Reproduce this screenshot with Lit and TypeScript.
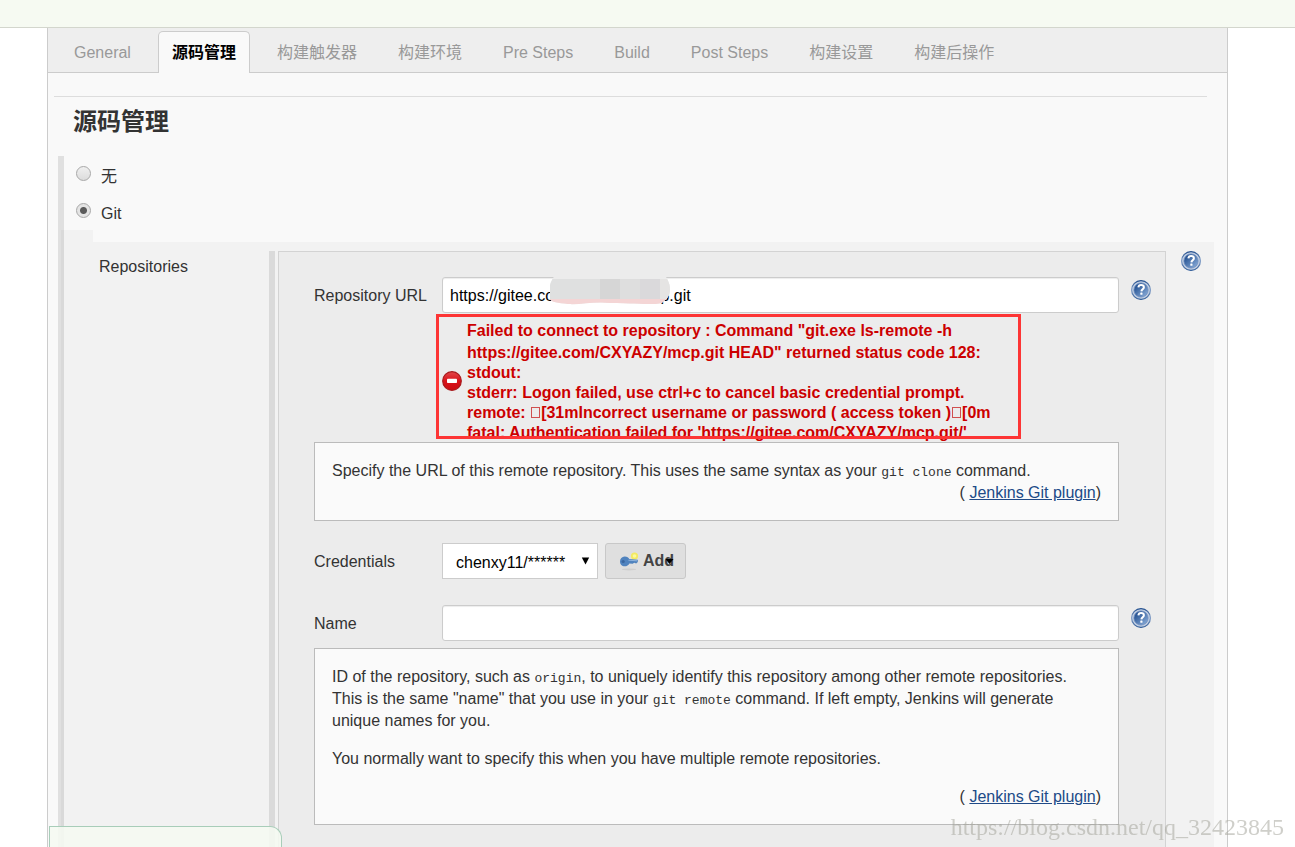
import { LitElement, html, css, svg } from "lit";
import { customElement, property, state } from "lit/decorators.js";
import { classMap } from "lit/directives/class-map.js";

@customElement("help-button")
class HelpButton extends LitElement {
  @property() label = "Help";

  static styles = css`
    :host {
      display: block;
      width: 20px;
      height: 20px;
    }
    .help {
      display: block;
      width: 20px;
      height: 20px;
      padding: 0;
      border: 0;
      background: none;
      cursor: pointer;
    }
    .icon {
      display: block;
    }
  `;

  render() {
    return html`
      <button class="help" type="button" aria-label=${this.label}>
        <svg class="icon" width="20" height="20" viewBox="0 0 20 20" aria-hidden="true">
          <defs>
            <linearGradient id="core" x1="0" y1="0" x2="1" y2="1">
              <stop offset="0.1" stop-color="#1c4a8c" />
              <stop offset="0.9" stop-color="#86a9d6" />
            </linearGradient>
            <linearGradient id="rim" x1="0" y1="0" x2="0" y2="1">
              <stop offset="0" stop-color="#24508f" />
              <stop offset="0.5" stop-color="#7f9cc6" />
              <stop offset="1" stop-color="#2b5896" />
            </linearGradient>
          </defs>
          <circle cx="10" cy="10" r="9.4" fill="#c3d0e3" stroke="url(#rim)" stroke-width="1.2" />
          <circle cx="10" cy="10" r="7.1" fill="url(#core)" stroke="#6c8cbc" stroke-width="0.8" />
          <path
            d="M7.4 7.4C7.5 5.8 8.6 5 10.1 5c1.6 0 2.8.9 2.8 2.3 0 1.9-2.3 2.1-2.5 4"
            fill="none"
            stroke="#fff"
            stroke-width="2"
          />
          <rect x="9.3" y="12.6" width="2.2" height="2.2" rx="0.5" fill="#fff" />
        </svg>
      </button>
    `;
  }
}

@customElement("app-root")
class AppRoot extends LitElement {
  @state() private activeTab = 1;
  @state() private scm = "git";

  private tabs = [
    { name: "General", lang: "en" },
    { name: "源码管理", lang: "zh" },
    { name: "构建触发器", lang: "zh" },
    { name: "构建环境", lang: "zh" },
    { name: "Pre Steps", lang: "en" },
    { name: "Build", lang: "en" },
    { name: "Post Steps", lang: "en" },
    { name: "构建设置", lang: "zh" },
    { name: "构建后操作", lang: "zh" },
  ];

  static styles = css`
    :host {
      display: flex;
      flex-direction: column;
      min-height: 100vh;
      box-sizing: border-box;
      background: #fff;
      color: #333;
      font-family: "Liberation Sans", "Noto Sans CJK SC", sans-serif;
      font-size: 16px;
      line-height: 22px;
    }
    * {
      box-sizing: border-box;
    }
    button,
    input,
    select {
      font-family: inherit;
      font-size: 16px;
      margin: 0;
    }
    .crumbs {
      height: 28px;
      background: #f6faf2;
      border-bottom: 1px solid #d3d6cd;
    }
    .panel {
      flex: 1;
      display: flex;
      flex-direction: column;
      margin: 0 67px 0 47px;
      border: solid #ccc;
      border-width: 0 1px;
      background: #f9f9f9;
    }
    .tabs {
      display: flex;
      gap: 13px;
      height: 45px;
      padding: 3px 12px 0;
      background: #eee;
      border-bottom: 1px solid #ccc;
    }
    .tab {
      height: 42px;
      padding: 0 13px;
      border: 1px solid transparent;
      border-bottom: 0;
      border-radius: 5px 5px 0 0;
      background: none;
      color: #999;
      white-space: nowrap;
      cursor: pointer;
    }
    .tab.zh {
      padding-bottom: 4px;
    }
    .tab.active {
      background: #f9f9f9;
      border-color: #ccc;
      color: #000;
      font-weight: bold;
    }
    .rule {
      margin: 23px 20px 0 6px;
      border: 0;
      border-top: 1px solid #ddd;
    }
    .title {
      margin: 0 0 9px;
      padding-left: 25px;
      font-size: 24px;
      line-height: 50px;
      font-weight: bold;
    }
    .scm {
      flex: 1;
      display: flex;
      flex-direction: column;
      margin: 0 13px 0 10px;
      border-left: 6px solid #e0e0e0;
    }
    .choice {
      display: flex;
      align-items: flex-start;
      gap: 10px;
      height: 37px;
      padding: 10px 0 0 12px;
    }
    .radio {
      appearance: none;
      width: 15px;
      height: 15px;
      border: 1px solid #a8a8a8;
      border-radius: 50%;
      background: linear-gradient(#f0f0f0, #dcdcdc);
    }
    .radio:checked {
      background: radial-gradient(circle, #5a5a5a 0 3px, #e4e4e4 4px);
    }
    .notch {
      width: 32px;
      height: 12px;
      margin-left: -3px;
      background: rgba(0, 0, 0, 0.026);
    }
    .repos {
      flex: 1;
      display: grid;
      grid-template-columns: 208px 1fr 48px;
      margin-left: -3px;
      padding-top: 9px;
      background: rgba(0, 0, 0, 0.026);
    }
    .repos-label {
      padding: 5px 0 0 38px;
    }
    .repos-list {
      display: flex;
      padding-left: 3px;
      border-left: 6px solid #dadada;
    }
    .repos-help {
      padding-left: 15px;
    }
    .repo {
      flex: 1;
      display: grid;
      grid-template-columns: 128px 1fr 46px;
      align-content: start;
      padding: 25px 0 0 35px;
      border: 1px solid #d3d3d3;
      border-bottom: 0;
      background: #ececec;
    }
    .label {
      grid-column: 1;
      height: 36px;
      line-height: 38px;
    }
    .field {
      position: relative;
    }
    .text {
      display: block;
      width: 100%;
      height: 36px;
      padding: 2px 7px 0;
      border: 1px solid #ccc;
      border-radius: 3px;
      background: #fff;
      box-shadow: inset 0 1px 1px rgba(0, 0, 0, 0.075);
      color: #000;
      outline: 0;
    }
    .side {
      padding: 3px 0 0 12px;
    }
    .mask {
      position: absolute;
      left: 108px;
      top: -2px;
    }
    .error {
      grid-column: 2;
      position: relative;
      display: flex;
      align-items: center;
      gap: 5px;
      max-width: 576px;
      margin-bottom: -1px;
      padding-top: 6px;
      color: #c00;
      font-weight: bold;
      white-space: nowrap;
    }
    .error-icon {
      flex: none;
    }
    .error-head {
      line-height: 24px;
    }
    .error-log {
      margin: 0;
      font-family: inherit;
      line-height: 20px;
    }
    .missing {
      display: inline-block;
      width: 9px;
      height: 11px;
      margin: 0 1px;
      border: 1px solid #d05050;
    }
    .marker {
      position: absolute;
      inset: 1px -3px 4px -6px;
      border: 3px solid #fd3535;
      pointer-events: none;
    }
    .note {
      grid-column: 1 / 3;
      padding: 17px 17px 16px;
      border: 1px solid #bbb;
      background: #fafafa;
    }
    .note-text {
      margin: 0 0 16px;
    }
    .note-text.tight {
      margin: 0;
    }
    .code {
      font-family: "Liberation Mono", monospace;
      font-size: 13px;
      line-height: 16px;
    }
    .from {
      text-align: right;
    }
    .link {
      color: #204a87;
      text-decoration: underline;
    }
    .gap-large {
      margin-top: 22px;
      margin-bottom: 26px;
    }
    .gap-small {
      margin-bottom: 7px;
    }
    .creds {
      display: flex;
      gap: 7px;
    }
    .pick {
      position: relative;
    }
    .select {
      appearance: none;
      display: block;
      width: 156px;
      height: 36px;
      padding: 2px 24px 0 13px;
      border: 1px solid #ccc;
      border-radius: 0;
      background: #fff;
      color: #000;
    }
    .pick-arrow {
      position: absolute;
      right: 8px;
      top: 14px;
      pointer-events: none;
    }
    .add {
      position: relative;
      display: flex;
      align-items: center;
      gap: 4px;
      width: 81px;
      height: 36px;
      padding: 0 0 0 13px;
      border: 1px solid #c8c8c8;
      border-radius: 3px;
      background: #dfdfdf;
      color: #444;
      font-weight: bold;
    }
    .key {
      flex: none;
    }
    .add-arrow {
      position: absolute;
      right: 11px;
      top: 14px;
    }
    .status {
      position: fixed;
      left: 49px;
      bottom: 0;
      width: 233px;
      height: 21px;
      border: 1px solid #a8cdb9;
      border-bottom: 0;
      border-radius: 0 12px 0 0;
      background: rgba(246, 250, 242, 0.85);
    }
    .watermark {
      position: fixed;
      right: 11px;
      bottom: 6px;
      color: rgba(160, 160, 150, 0.5);
      font-family: "Liberation Serif", serif;
      font-size: 24px;
      line-height: 28px;
    }
  `;

  private mask() {
    const cells = [
      [0, 50, "#dfe0e0"],
      [50, 20, "#d6d6d6"],
      [70, 20, "#dedede"],
      [90, 20, "#dad9db"],
      [110, 10, "#e5e4e3"],
    ] as [number, number, string][];
    return html`<svg class="mask" width="120" height="31" viewBox="0 0 120 31" aria-hidden="true">
      <clipPath id="blob">
        <path
          d="M5 0H115C117 4 120 8 120 14C120 20 118 23 113 27C110 30 100 29 60 28C45 26 30 30 18 29C8 28 1 27 0 24V10C1 6 3 3 5 0Z"
        />
      </clipPath>
      <g clip-path="url(#blob)">
        <rect width="120" height="31" fill="#ececec" />
        ${cells.map(([x, w, fill]) => svg`<rect x=${x} y="4" width=${w} height="20" fill=${fill} />`)}
        <rect y="24" width="120" height="7" fill="#f4d5d5" />
      </g>
    </svg>`;
  }

  private source() {
    return html`<div class="from">( <a class="link" href="#git-plugin">Jenkins Git plugin</a>)</div>`;
  }

  private choice(value: string, text: string) {
    return html`<label class="choice">
      <input
        class="radio"
        type="radio"
        name="scm"
        .checked=${this.scm === value}
        @change=${() => (this.scm = value)}
      />
      <span>${text}</span>
    </label>`;
  }

  render() {
    return html`
      <header class="crumbs"></header>
      <main class="panel">
        <nav class="tabs">
          ${this.tabs.map(
            (tab, i) => html`<button
              type="button"
              class=${classMap({ tab: true, zh: tab.lang === "zh", active: i === this.activeTab })}
              @click=${() => (this.activeTab = i)}
            >${tab.name}</button>`,
          )}
        </nav>
        <hr class="rule" />
        <h1 class="title">源码管理</h1>
        <section class="scm">
          ${this.choice("none", "无")} ${this.choice("git", "Git")}
          <div class="notch"></div>
          <div class="repos">
            <div class="repos-label">Repositories</div>
            <div class="repos-list">
              <div class="repo">
                <label class="label" for="url">Repository URL</label>
                <div class="field">
                  <input class="text" id="url" type="text" value="https://gitee.com/CXYAZY/mcp.git" />
                  ${this.mask()}
                </div>
                <div class="side"><help-button label="Help for Repository URL"></help-button></div>

                <div class="error" role="alert">
                  <svg class="error-icon" width="20" height="20" viewBox="0 0 20 20" aria-hidden="true">
                    <defs>
                      <linearGradient id="stop" x1="0" y1="0" x2="0" y2="1">
                        <stop offset="0" stop-color="#e2474a" />
                        <stop offset="0.5" stop-color="#d8121a" />
                        <stop offset="1" stop-color="#cc0c12" />
                      </linearGradient>
                    </defs>
                    <circle cx="10" cy="10" r="9.3" fill="url(#stop)" stroke="#a8191c" stroke-width="1.2" />
                    <rect x="5" y="7.8" width="10" height="4.2" rx="0.8" fill="#fff" />
                  </svg>
                  <div>
                    <div class="error-head">Failed to connect to repository : Command "git.exe ls-remote -h</div>
                    <pre class="error-log">https://gitee.com/CXYAZY/mcp.git HEAD" returned status code 128:
stdout:
stderr: Logon failed, use ctrl+c to cancel basic credential prompt.
remote: <span class="missing"></span>[31mIncorrect username or password ( access token )<span class="missing"></span>[0m
fatal: Authentication failed for 'https://gitee.com/CXYAZY/mcp.git/'</pre>
                  </div>
                  <div class="marker"></div>
                </div>

                <div class="note">
                  <p class="note-text tight">
                    Specify the URL of this remote repository. This uses the same syntax as your
                    <code class="code">git clone</code> command.
                  </p>
                  ${this.source()}
                </div>

                <label class="label gap-large" for="creds">Credentials</label>
                <div class="creds gap-large">
                  <div class="pick">
                    <select class="select" id="creds">
                      <option>chenxy11/******</option>
                    </select>
                    <svg class="pick-arrow" width="9" height="8" viewBox="0 0 9 8" aria-hidden="true">
                      <path d="M0.8 0.5h7.4L4.5 7.5z" fill="#000" />
                    </svg>
                  </div>
                  <button class="add" type="button">
                    <svg class="key" width="20" height="20" viewBox="0 0 20 20" aria-hidden="true">
                      <ellipse cx="10" cy="18.4" rx="7" ry="1" fill="#cfcfcf" />
                      <circle cx="15.5" cy="5" r="3.6" fill="#f3ea62" />
                      <circle cx="15.5" cy="5" r="1.8" fill="#fbf8a0" />
                      <path
                        d="M5.6 5.6C8 5.500 9.600 6.800 10.200 8L18.800 8.700V11L17.200 12.600L15.300 11.800L13.600 12.700L10.400 12.400C9.500 14.200 7.800 15.300 5.700 15.300C2.900 15.300 1 13.200 1 10.400C1 7.600 3 5.700 5.600 5.600Z"
                        fill="#5083be"
                      />
                      <path d="M9.400 9.200L18 9.800" stroke="#8fb3dc" stroke-width="1" />
                      <circle cx="4.200" cy="10.500" r="1.600" fill="#3a669f" />
                    </svg>
                    <span>Add</span>
                    <svg class="add-arrow" width="9" height="7" viewBox="0 0 9 7" aria-hidden="true">
                      <path d="M0.500 1h8L4.500 6z" fill="#000" />
                    </svg>
                  </button>
                </div>

                <label class="label gap-small" for="name">Name</label>
                <div class="field gap-small"><input class="text" id="name" type="text" /></div>
                <div class="side"><help-button label="Help for Name"></help-button></div>

                <div class="note">
                  <p class="note-text">
                    ID of the repository, such as <code class="code">origin</code>, to uniquely identify this
                    repository among other remote repositories. This is the same "name" that you use in your
                    <code class="code">git remote</code> command. If left empty, Jenkins will generate unique
                    names for you.
                  </p>
                  <p class="note-text">
                    You normally want to specify this when you have multiple remote repositories.
                  </p>
                  ${this.source()}
                </div>
              </div>
            </div>
            <div class="repos-help"><help-button label="Help for Repositories"></help-button></div>
          </div>
        </section>
      </main>
      <div class="status"></div>
      <div class="watermark">https://blog.csdn.net/qq_32423845</div>
    `;
  }
}
